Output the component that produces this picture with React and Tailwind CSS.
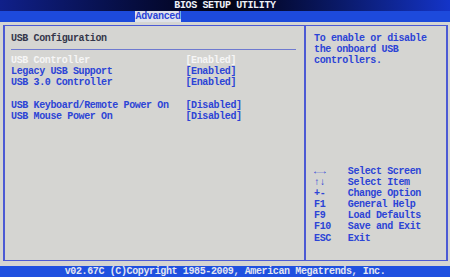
import React from "react";

const R = "h-[11.08px] leading-[11.08px] whitespace-pre";

const items = [
  { label: "USB Controller", value: "[Enabled]", sel: true },
  { label: "Legacy USB Support", value: "[Enabled]" },
  { label: "USB 3.0 Controller", value: "[Enabled]" },
  null,
  { label: "USB Keyboard/Remote Power On", value: "[Disabled]" },
  { label: "USB Mouse Power On", value: "[Disabled]" },
];

const legend = [
  ["←→", "Select Screen"],
  ["↑↓", "Select Item"],
  ["+-", "Change Option"],
  ["F1", "General Help"],
  ["F9", "Load Defaults"],
  ["F10", "Save and Exit"],
  ["ESC", "Exit"],
];

export default function App() {
  return (
    <div
      className="w-[450px] h-[277px] flex flex-col overflow-hidden bg-[#d5d5d2] font-bold text-[10px] tracking-[-0.375px]"
      style={{ fontFamily: '"Liberation Mono", "DejaVu Sans Mono", monospace' }}
    >
      {/* title bar */}
      <div className={`${R} shrink-0 text-center text-[#eef0f8] bg-gradient-to-r from-[#10208a] via-[#020314] to-[#1434c8]`}>
        BIOS SETUP UTILITY
      </div>
      {/* tab bar */}
      <div className={`${R} shrink-0 bg-[#1d4adc] pl-[135px]`}>
        <span className="inline-block bg-[#dfe2ea] text-[#2a44d8] px-[0.5px]">Advanced</span>
      </div>
      {/* main */}
      <div className="flex-1 pt-[3px] pb-[5px] pl-[3px] pr-[2px]">
        <div className="h-full flex border-y border-x-2 border-[#4c5ad4]">
          {/* left panel */}
          <div className="w-[301px] shrink-0 border-r-2 border-[#4c5ad4] pt-[7px] pl-[6px]">
            <div className={`${R} text-[#34364a]`}>USB Configuration</div>
            <div className="h-[11.08px] flex items-center pr-[8px]">
              <div className="w-full h-px bg-[#6f7ad0]" />
            </div>
            {items.map((it, i) =>
              it ? (
                <div key={i} className={`${R} flex`}>
                  <span className={`w-[174.4px] ${it.sel ? "text-[#f6f6f6]" : "text-[#2c44d6]"}`}>{it.label}</span>
                  <span className={it.sel ? "text-[#f6f6f6]" : "text-[#2c44d6]"}>{it.value}</span>
                </div>
              ) : (
                <div key={i} className="h-[11.08px]" />
              )
            )}
          </div>
          {/* right panel */}
          <div className="flex-1 pt-[7px] pl-[8px] text-[#2c44d6] flex flex-col">
            <div className={R}>To enable or disable</div>
            <div className={R}>the onboard USB</div>
            <div className={R}>controllers.</div>
            <div className="h-[99.7px]" />
            {legend.map(([k, d]) => (
              <div key={k} className={`${R} flex`}>
                <span className="w-[33.75px]">{k}</span>
                <span>{d}</span>
              </div>
            ))}
          </div>
        </div>
      </div>
      {/* bottom bar */}
      <div className={`${R} shrink-0 bg-[#1f50e0] text-[#e4e6f0] text-center`}>
        v02.67C (C)Copyright 1985-2009, American Megatrends, Inc.
      </div>
    </div>
  );
}
